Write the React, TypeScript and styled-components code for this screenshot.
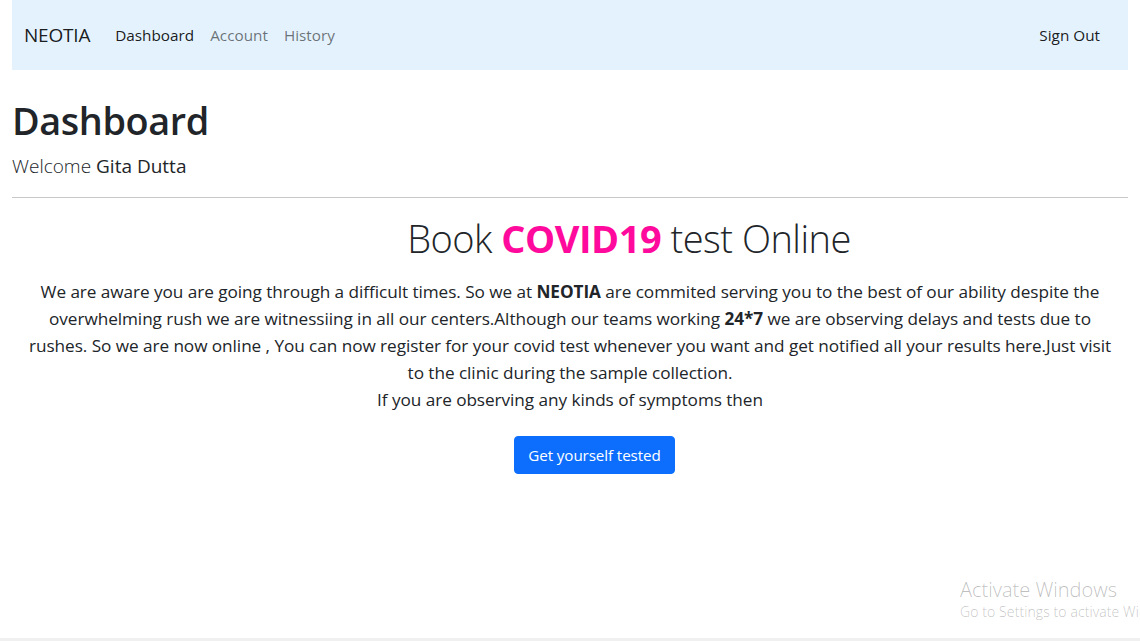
import React from "react";
import styled, { createGlobalStyle } from "styled-components";

const Global = createGlobalStyle`
  html, body { margin: 0; padding: 0; background: #fff; }
  body {
    font-family: "Open Sans", "Noto Sans", sans-serif;
    color: #212529;
    height: 641px;
    overflow: hidden;
  }
  * { box-sizing: border-box; }
`;

const Page = styled.div`
  position: relative;
  height: 641px;
  padding: 0 12px;
  border-bottom: 3px solid #f0f0f0;
  overflow: hidden;
`;

const Navbar = styled.nav`
  height: 70px;
  background: #e3f2fd;
  display: flex;
  align-items: center;
  padding: 0 12px 0 12px;
`;

const Brand = styled.a`
  font-size: 19px;
  color: rgba(0, 0, 0, 0.9);
  margin-right: 25px;
  letter-spacing: -0.2px;
`;

const NavLink = styled.a<{ $active?: boolean }>`
  font-size: 15.3px;
  color: ${(p) => (p.$active ? "rgba(0,0,0,0.9)" : "rgba(0,0,0,0.55)")};
  margin-right: 16px;
  letter-spacing: 0;
`;

const Spacer = styled.div`
  flex: 1;
`;

const Header = styled.header`
  padding-top: 27px;
`;

const Title = styled.h1`
  margin: 0 0 6px;
  font-size: 37.8px;
  line-height: 48px;
  font-weight: 600;
  letter-spacing: -0.4px;
`;

const Lead = styled.p`
  margin: 0;
  font-size: 19px;
  line-height: 30px;
  font-weight: 300;
  letter-spacing: 0;
  b { font-weight: 400; }
`;

const Rule = styled.hr`
  margin: 16px 0 0;
  border: 0;
  border-top: 1px solid #c8c8c8;
`;

const Hero = styled.section`
  display: flex;
  flex-direction: column;
  align-items: center;
  text-align: center;
`;

const HeroTitle = styled.h2`
  margin: 16px 0 16px;
  padding-left: 118px;
  font-size: 38px;
  line-height: 48px;
  font-weight: 300;
  letter-spacing: -0.5px;
  span { color: #ff0a9c; font-weight: 700; }
`;

const Body = styled.p`
  margin: 0;
  font-size: 17.2px;
  line-height: 27px;
  letter-spacing: -0.06px;
  b { font-weight: 700; }
`;

const Line = styled.span`
  display: block;
  white-space: nowrap;
`;

const Button = styled.button`
  margin-top: 23px;
  margin-left: 49px;
  height: 38px;
  padding: 0 13px;
  font-family: inherit;
  font-size: 15.2px;
  letter-spacing: -0.1px;
  color: #fff;
  background: #0d6efd;
  border: 1px solid #0d6efd;
  border-radius: 4px;
`;

const Watermark = styled.div`
  position: absolute;
  left: 960px;
  top: 578px;
  white-space: nowrap;
  color: rgba(0, 0, 0, 0.26);
  font-family: "Open Sans", sans-serif;
  font-weight: 300;
`;

const WTitle = styled.div`
  font-size: 20px;
  line-height: 24px;
  letter-spacing: 0;
`;

const WSub = styled.div`
  font-size: 14px;
  line-height: 20px;
  letter-spacing: 0.1px;
`;

export default function App() {
  return (
    <>
      <Global />
      <Page>
        <Navbar>
          <Brand>NEOTIA</Brand>
          <NavLink $active>Dashboard</NavLink>
          <NavLink>Account</NavLink>
          <NavLink>History</NavLink>
          <Spacer />
          <NavLink $active>Sign Out</NavLink>
        </Navbar>
        <Header>
          <Title>Dashboard</Title>
          <Lead>
            Welcome <b>Gita Dutta</b>
          </Lead>
        </Header>
        <Rule />
        <Hero>
          <HeroTitle>
            Book <span>COVID19</span> test Online
          </HeroTitle>
          <Body>
            <Line>
              We are aware you are going through a difficult times. So we at <b>NEOTIA</b> are commited serving you to the best of our ability despite the
            </Line>
            <Line>
              overwhelming rush we are witnessiing in all our centers.Although our teams working <b>24*7</b> we are observing delays and tests due to
            </Line>
            <Line>
              rushes. So we are now online , You can now register for your covid test whenever you want and get notified all your results here.Just visit
            </Line>
            <Line>to the clinic during the sample collection.</Line>
            <Line>If you are observing any kinds of symptoms then</Line>
          </Body>
          <Button>Get yourself tested</Button>
        </Hero>
        <Watermark>
          <WTitle>Activate Windows</WTitle>
          <WSub>Go to Settings to activate Windows.</WSub>
        </Watermark>
      </Page>
    </>
  );
}
